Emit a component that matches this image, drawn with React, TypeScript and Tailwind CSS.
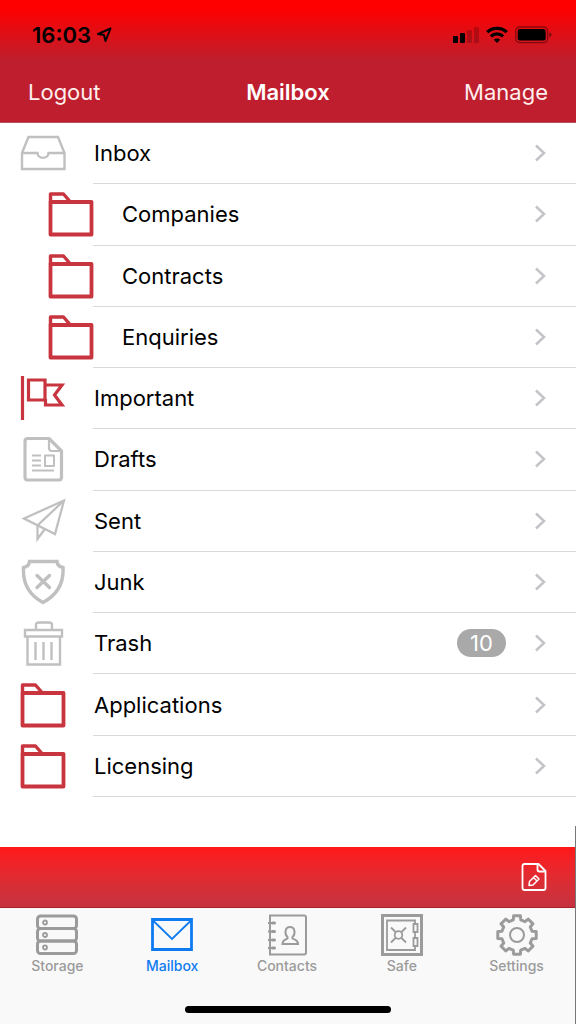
import { useState } from 'react';
import type { ReactNode } from 'react';

type FolderIcon = 'inbox' | 'folder' | 'flag' | 'draft' | 'sent' | 'junk' | 'trash';

interface MailFolder {
  name: string;
  icon: FolderIcon;
  nested?: boolean;
  count?: number;
}

const folders: MailFolder[] = [
  { name: 'Inbox', icon: 'inbox' },
  { name: 'Companies', icon: 'folder', nested: true },
  { name: 'Contracts', icon: 'folder', nested: true },
  { name: 'Enquiries', icon: 'folder', nested: true },
  { name: 'Important', icon: 'flag' },
  { name: 'Drafts', icon: 'draft' },
  { name: 'Sent', icon: 'sent' },
  { name: 'Junk', icon: 'junk' },
  { name: 'Trash', icon: 'trash', count: 10 },
  { name: 'Applications', icon: 'folder' },
  { name: 'Licensing', icon: 'folder' },
];

const GRAY = '#c0c0c0';
const RED = '#c8353f';

// 8 teeth, four corners for each
const gearPath =
  Array.from({ length: 8 }, (_, i) => {
    const corners: [number, number][] = [
      [-14, 15.5],
      [-10, 19.5],
      [10, 19.5],
      [14, 15.5],
    ];
    return corners
      .map(([offset, radius]) => {
        const angle = ((i * 45 + offset) * Math.PI) / 180;
        return `${(21 + radius * Math.sin(angle)).toFixed(2)} ${(21 - radius * Math.cos(angle)).toFixed(2)}`;
      })
      .join(' L');
  })
    .map((tooth, i) => (i === 0 ? 'M' : 'L') + tooth)
    .join(' ') + ' Z';

const folderIcons: Record<FolderIcon, ReactNode> = {
  inbox: (
    <g stroke={GRAY} strokeWidth="2.4">
      <path d="M2 23 L8.5 7 H38 L44.5 23 V39 H2 Z" />
      <path d="M2 23 H17.5 C18 29.5 28 29.5 28.5 23 H44.5" />
    </g>
  ),
  folder: (
    <g stroke={RED} strokeWidth="3.8" strokeLinejoin="round">
      <path d="M2.5 11 H43.5 V43.5 H2.5 Z" />
      <path d="M2.5 11 V3 H15.5 L22 10.5" strokeWidth="3.4" />
    </g>
  ),
  flag: (
    <g stroke={RED} strokeWidth="3.2">
      <path d="M2.5 1 V45" />
      <path d="M8.5 5 H25 V25 H8.5 Z" />
      <path d="M25 10 H42 L34.5 20 L42 30 H25.5 V24" />
    </g>
  ),
  draft: (
    <g stroke={GRAY} strokeWidth="3.2" strokeLinejoin="round">
      <path d="M8 2.5 H29 L41.5 15 V41 Q41.5 44 39 44 H7.5 Q5 44 5 41 V5 Q5 2.5 8 2.5 Z" />
      <path d="M29 3 V12 Q29 15 32 15 H41" strokeWidth="2.2" />
      <path d="M25 19.5 H34 V30 H25 Z M12 19.5 H21 M12 24.5 H21 M12 29.5 H21 M12 34.5 H34" strokeWidth="2" />
    </g>
  ),
  sent: (
    <g stroke={GRAY} strokeWidth="2.3">
      <path d="M44 2.500 L4 20.5 L35 36 Z" />
      <path d="M44 2.500 L17.5 27.5 V41 L24.5 31.5" />
    </g>
  ),
  junk: (
    <g stroke={GRAY} strokeWidth="3.4">
      <path d="M9.5 2.5 H37 Q37.5 7.5 43 8.5 C44 25 37 36 23 43.5 C9 36 2.5 25 3.5 8.5 Q9 7.5 9.5 2.5 Z" />
      <path d="M17 16.5 L29.5 28.500 M29.5 16.5 L17 28.500" strokeLinecap="round" />
    </g>
  ),
  trash: (
    <g stroke={GRAY} strokeWidth="2.400">
      <path d="M5 10 H42 V16.5 H5 Z" />
      <path d="M16 10 V5 Q16 2.5 19 2.5 H29 Q32 2.5 32 5 V10" />
      <path d="M7.5 16.5 V44.5 H40 V16.5" />
      <path d="M15.5 22 V40 M23.5 22 V40 M31.5 22 V40" />
    </g>
  ),
};

const tabs: { label: string; icon: ReactNode }[] = [
  {
    label: 'Storage',
    icon: (
      <g strokeWidth="3">
        <rect x="1.5" y="2" width="39" height="12.5" rx="3" />
        <rect x="1.5" y="14.5" width="39" height="12.5" rx="3" />
        <rect x="1.5" y="27" width="39" height="12.5" rx="3" />
        <g strokeWidth="1.8">
          <circle cx="9" cy="8.5" r="2" />
          <circle cx="9" cy="21" r="2" />
          <circle cx="9" cy="33.5" r="2" />
        </g>
      </g>
    ),
  },
  {
    label: 'Mailbox',
    icon: (
      <g strokeWidth="2.8">
        <path d="M1.5 5.5 H40.5 V35.5 H1.5 Z" />
        <path d="M2 6.5 L21 25 L40 6.5" strokeWidth="1.8" />
      </g>
    ),
  },
  {
    label: 'Contacts',
    icon: (
      <g strokeWidth="2">
        <path d="M4 1.500 H38 Q40 1.500 40 3.500 V38.500 Q40 40.500 38 40.500 H4 Z" />
        <path d="M2 9 H9 M2 17.5 H9 M2 26 H9 M2 34 H9" />
        <path d="M6.500 9 H8.500 M6.500 17.5 H8.500 M6.500 26 H8.500 M6.500 34 H8.500" strokeWidth="3" strokeLinecap="round" />
        <path d="M21.500 23 C18.500 20.500 18.500 13 24 13 C29.500 13 29.500 20.500 26.500 23 V24.500 C29 26 32 25.500 32 30 H16.500 C16.500 25.500 19.500 26 21.500 24.500 Z" />
      </g>
    ),
  },
  {
    label: 'Safe',
    icon: (
      <g strokeWidth="1.8">
        <rect x="1.5" y="1.5" width="39" height="39" strokeWidth="3" />
        <path d="M34 9 V6.5 H6 V36 H34 V32 M34 18 V24" />
        <path d="M32.5 10 H36.5 V18 H32.5 Z M32.5 24 H36.5 V32 H32.5 Z" />
        <circle cx="17.5" cy="21" r="3.8" />
        <path d="M10 13.5 L15 18.5 M25 13.5 L20 18.5 M10 28.5 L15 23.5 M25 28.5 L20 23.5" />
      </g>
    ),
  },
  {
    label: 'Settings',
    icon: (
      <g>
        <path d={gearPath} strokeWidth="3" strokeLinejoin="round" />
        <circle cx="21" cy="21" r="7" strokeWidth="2" />
      </g>
    ),
  },
];

function StatusBar() {
  return (
    <div className="flex h-[62px] items-center justify-between pt-2 pr-6 pl-8 text-black">
      <div className="flex items-center gap-1">
        <span className="text-[22px] leading-7 font-semibold">16:03</span>
        <svg width="18" height="18" viewBox="0 0 18 18" fill="none" stroke="currentColor" strokeWidth="2" strokeLinejoin="round">
          <path d="M15.5 2.500 L3 8 L9 9 L10.5 15 Z" />
        </svg>
      </div>
      <div className="flex items-center gap-[7px]">
        <svg width="26" height="18" viewBox="0 0 26 18" fill="currentColor">
          <rect x="0" y="10" width="5" height="7" rx="1" />
          <rect x="7" y="7" width="5" height="10" rx="1" />
          <rect x="14" y="4" width="5" height="13" rx="1" opacity="0.2" />
          <rect x="21" y="1" width="5" height="16" rx="1" opacity="0.2" />
        </svg>
        <svg width="22" height="18" viewBox="0 0 22 18" fill="none" stroke="currentColor" strokeWidth="3.2">
          <path d="M1.2 6.2 C6.5 1 15.5 1 20.8 6.2" />
          <path d="M4.9 10.3 C8.3 7 13.7 7 17.1 10.3" />
          <path d="M11 17 L7.8 13.8 C9.6 12.2 12.4 12.2 14.2 13.8 Z" fill="currentColor" stroke="none" />
        </svg>
        <svg width="37" height="18" viewBox="0 0 37 18" fill="none">
          <rect x="0.7" y="1" width="32" height="15.6" rx="4" stroke="currentColor" strokeWidth="1.3" opacity="0.4" />
          <rect x="2.7" y="3" width="28" height="11.6" rx="2" fill="currentColor" />
          <path d="M34.5 6.3 Q36.5 7 36.5 8.8 Q36.5 10.6 34.5 11.3 Z" fill="currentColor" opacity="0.5" />
        </svg>
      </div>
    </div>
  );
}

export default function App() {
  const [activeTab, setActiveTab] = useState('Mailbox');

  return (
    <div className="relative flex min-h-screen flex-col bg-white font-['Inter',sans-serif]">
      <header className="h-[123px] border-b border-[#b3535c] bg-[linear-gradient(#ff0000_0,#ff0000_8px,#be1e2d_60px)]">
        <StatusBar />
        <nav className="grid h-[60px] grid-cols-3 items-center px-7 text-[22px] leading-7 text-[#ffeeee]">
          <button className="justify-self-start">Logout</button>
          <h1 className="justify-self-center font-semibold text-white">Mailbox</h1>
          <button className="justify-self-end">Manage</button>
        </nav>
      </header>

      <main className="flex-1">
        <ul className="grid min-h-[674px] auto-rows-fr">
          {folders.map((folder) => (
            <li key={folder.name} className="flex flex-col">
              <button
                className={`flex w-full flex-1 items-center gap-7 pr-[30px] text-left ${folder.nested ? 'pl-12' : 'pl-5'}`}
              >
                <svg width="46" height="46" viewBox="0 0 46 46" fill="none" className="shrink-0">
                  {folderIcons[folder.icon]}
                </svg>
                <span className="flex-1 text-[22px] leading-7 text-black">{folder.name}</span>
                {folder.count && (
                  <span className="flex h-7 w-[49px] items-center justify-center rounded-full bg-[#a9a9a9] text-[22px] leading-7 text-white">
                    {folder.count}
                  </span>
                )}
                <svg width="12" height="18" viewBox="0 0 12 18" fill="none" stroke="#c4c4c8" strokeWidth="2.5">
                  <path d="M2 1.5 L10 9 L2 16.5" />
                </svg>
              </button>
              <hr className="ml-[93px] border-[#d9d9db]" />
            </li>
          ))}
        </ul>
      </main>

      <div className="flex h-[61px] items-center justify-end border-b border-[#a8202c] bg-linear-to-b from-[#ff1717] to-[#c4333f] pr-[29px]">
        <button aria-label="Compose">
          <svg width="26" height="30" viewBox="0 0 26 30" fill="none" stroke="white" strokeWidth="1.8" strokeLinejoin="round">
            <path d="M3.5 2 H17.5 L24.5 9 V26 Q24.5 28 22.5 28 H3.5 Q1.5 28 1.5 26 V4 Q1.5 2 3.5 2 Z" />
            <path d="M16.5 2.500 V7.5 Q16.5 9.5 18.5 9.5 H24" />
            <path d="M8 23.5 L8.5 19.5 L14.5 13.5 L18 17 L12 23 Z M12.5 15.5 L16 19" strokeWidth="1.5" />
          </svg>
        </button>
      </div>

      <footer className="flex h-[116px] flex-col justify-between bg-[#f9f9f9] pt-[6px] pb-[11px]">
        <nav className="grid grid-cols-5 pr-0.5">
          {tabs.map((tab) => (
            <button
              key={tab.label}
              onClick={() => setActiveTab(tab.label)}
              className={`flex flex-col items-center ${activeTab === tab.label ? 'text-[#0f7bf2]' : 'text-[#9b9b9b]'}`}
            >
              <svg width="42" height="42" viewBox="0 0 42 42" fill="none" stroke="currentColor">
                {tab.icon}
              </svg>
              <span className="text-sm font-medium">{tab.label}</span>
            </button>
          ))}
        </nav>
        <div className="mx-auto h-[7px] w-[206px] rounded-full bg-black" />
      </footer>

      <div className="absolute right-0 bottom-0 h-[198px] w-px bg-[#777777]" />
    </div>
  );
}
